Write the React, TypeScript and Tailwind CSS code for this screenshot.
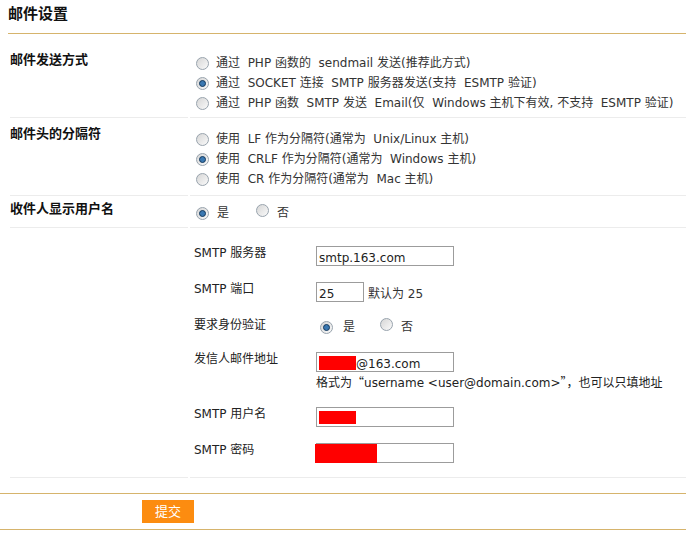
import React from "react";

function Radio({ checked }: { checked?: boolean }) {
  return (
    <span className="inline-flex w-[13px] h-[13px] shrink-0 items-center justify-center rounded-full border border-[#98a3ad] bg-gradient-to-br from-[#d6d6d6] to-[#fafafa]">
      {checked && <span className="w-[7px] h-[7px] rounded-full border border-[#15395c] bg-[#3a78b2]" />}
    </span>
  );
}

function Opt({ checked, children }: { checked?: boolean; children: React.ReactNode }) {
  return (
    <div className="flex items-center h-[20px] whitespace-pre">
      <Radio checked={checked} />
      <span className="ml-[7px]">{children}</span>
    </div>
  );
}

function Row({
  label,
  lpt,
  rpt,
  rpb,
  children,
}: {
  label: string;
  lpt: string;
  rpt: string;
  rpb: string;
  children: React.ReactNode;
}) {
  return (
    <div className="flex">
      <div className={`ml-[10px] w-[178px] border-b border-[#ececec] text-[13px] font-bold leading-[20px] text-[#111] ${lpt}`}>
        {label}
      </div>
      <div className={`ml-[2px] flex-1 border-b border-[#ececec] pl-[6px] ${rpt} ${rpb}`}>{children}</div>
    </div>
  );
}

function Field({ label, children }: { label: string; children: React.ReactNode }) {
  return (
    <div className="flex items-start py-[8px]">
      <div className="w-[122px] leading-[14px] text-[#222]">{label}</div>
      <div>{children}</div>
    </div>
  );
}

function Box({ w, children }: { w: string; children?: React.ReactNode }) {
  return (
    <div className={`flex h-[20px] items-center border border-[#9c9c9c] px-[2px] pt-[3px] text-[#222] ${w}`}>
      {children}
    </div>
  );
}

export default function App() {
  return (
    <div className="w-[686px] h-[533px] overflow-hidden bg-white text-[12px] text-[#333] font-['DejaVu_Sans','Noto_Sans_CJK_SC',sans-serif]">
      <div className="ml-[8px] h-[34px] border-b border-[#d6b46c] pt-[6px] text-[15px] font-bold leading-[16px] text-[#111]">
        邮件设置
      </div>
      <div className="mt-[9px]">
        <Row label="邮件发送方式" lpt="pt-[7px]" rpt="pt-[10px]" rpb="pb-[4px]">
          <Opt>{"通过  PHP 函数的  sendmail 发送(推荐此方式)"}</Opt>
          <Opt checked>{"通过  SOCKET 连接  SMTP 服务器发送(支持  ESMTP 验证)"}</Opt>
          <Opt>{"通过  PHP 函数  SMTP 发送  Email(仅  Windows 主机下有效, 不支持  ESMTP 验证)"}</Opt>
        </Row>
        <Row label="邮件头的分隔符" lpt="pt-[6px]" rpt="pt-[11px]" rpb="pb-[6px]">
          <Opt>{"使用  LF 作为分隔符(通常为  Unix/Linux 主机)"}</Opt>
          <Opt checked>{"使用  CRLF 作为分隔符(通常为  Windows 主机)"}</Opt>
          <Opt>{"使用  CR 作为分隔符(通常为  Mac 主机)"}</Opt>
        </Row>
        <Row label="收件人显示用户名" lpt="pt-[3px]" rpt="pt-[7px]" rpb="pb-[4px]">
          <div className="flex items-center h-[20px]">
            <Radio checked />
            <span className="ml-[8px]">是</span>
            <span className="ml-[27px]">
              <Radio />
            </span>
            <span className="ml-[8px]">否</span>
          </div>
        </Row>
        <div className="flex">
          <div className="ml-[10px] w-[178px] border-b border-[#ececec]" />
          <div className="ml-[2px] flex-1 border-b border-[#ececec] pl-[4px] pt-[10px] pb-[6px]">
            <Field label="SMTP 服务器">
              <Box w="w-[138px]">smtp.163.com</Box>
            </Field>
            <Field label="SMTP 端口">
              <div className="flex items-start">
                <Box w="w-[48px]">25</Box>
                <span className="ml-[4px] pt-[4px] leading-[16px]">默认为 25</span>
              </div>
            </Field>
            <div className="flex items-start pt-[8px] pb-[8px]">
              <div className="w-[122px] leading-[14px] text-[#222]">要求身份验证</div>
              <div className="flex h-[18px] items-center pl-[4px]">
                <Radio checked />
                <span className="ml-[10px]">是</span>
                <span className="ml-[25px]">
                  <Radio />
                </span>
                <span className="ml-[8px]">否</span>
              </div>
            </div>
            <Field label="发信人邮件地址">
              <Box w="w-[138px]">
                <span className="mt-[-2px] h-[14px] w-[37px] bg-[#ff0000]" />
                <span>@163.com</span>
              </Box>
              <div className="mt-[2px] whitespace-nowrap leading-[16px] text-[#222]">
                格式为
                <span className="font-['Noto_Sans_CJK_SC',sans-serif]">“</span>
                username &lt;user@domain.com&gt;
                <span className="font-['Noto_Sans_CJK_SC',sans-serif]">”，</span>
                也可以只填地址
              </div>
            </Field>
            <Field label="SMTP 用户名">
              <Box w="w-[138px]">
                <span className="mt-[-2px] h-[13px] w-[37px] bg-[#ff0000]" />
              </Box>
            </Field>
            <Field label="SMTP 密码">
              <Box w="w-[138px]">
                <span className="ml-[-4px] mt-[-3px] h-[19px] w-[62px] bg-[#ff0000]" />
              </Box>
            </Field>
          </div>
        </div>
      </div>
      <div className="mt-[15px] border-y border-[#d6b46c] py-[6px] pl-[142px]">
        <button className="h-[23px] w-[52px] bg-[#fc8c10] text-[13px] leading-[23px] text-white">提交</button>
      </div>
    </div>
  );
}
